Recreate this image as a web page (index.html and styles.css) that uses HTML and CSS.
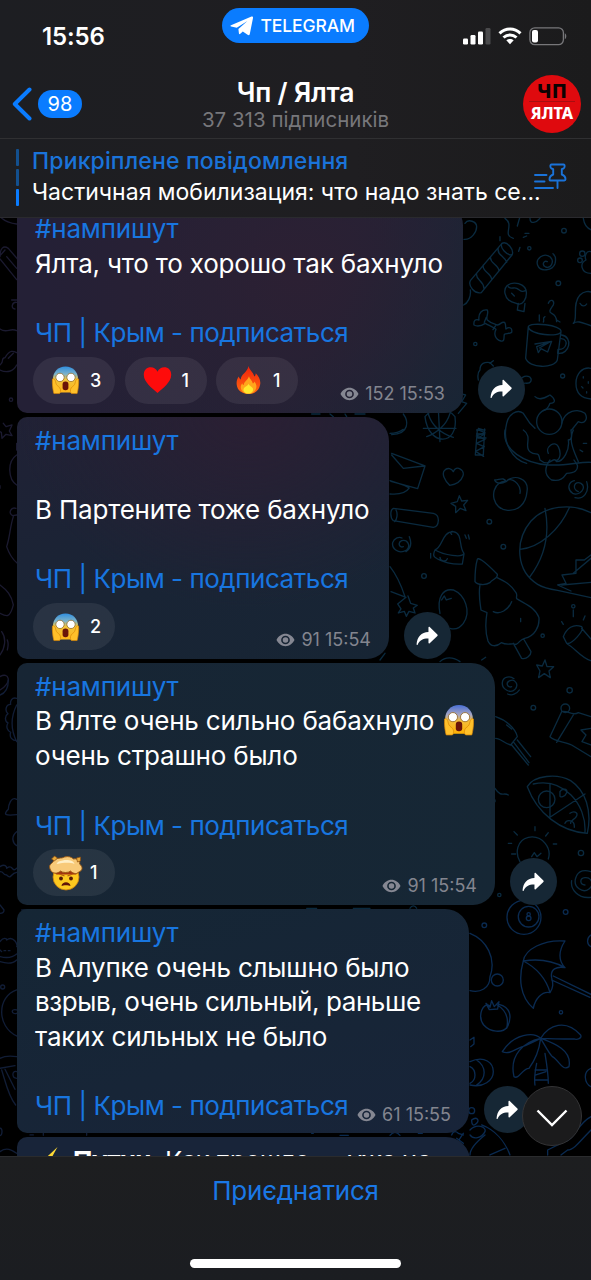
FILE: index.html
```html
<!DOCTYPE html>
<html lang="uk">

<head>
  <meta charset="UTF-8">
  <meta name="viewport" content="width=device-width, initial-scale=1.0">
  <title>Чп / Ялта</title>
  <link rel="stylesheet" href="styles.css">
</head>

<body>
  <!-- shared icons -->
  <svg class="sprite" aria-hidden="true">
    <defs>
      <linearGradient id="screamSkin" x1="0" y1="0" x2="0" y2="1">
        <stop offset="0" stop-color="#2f8fe0" />
        <stop offset=".3" stop-color="#7fb3c8" />
        <stop offset=".5" stop-color="#f2c43c" />
        <stop offset="1" stop-color="#ffb517" />
      </linearGradient>
      <linearGradient id="screamSkin2" x1="0" y1="0" x2="0" y2="1">
        <stop offset="0" stop-color="#4a6fd6" />
        <stop offset=".35" stop-color="#a9a7c0" />
        <stop offset=".55" stop-color="#f4bd3c" />
        <stop offset="1" stop-color="#ffb000" />
      </linearGradient>
      <linearGradient id="flame" x1="0" y1="0" x2="0" y2="1">
        <stop offset="0" stop-color="#f0200c" />
        <stop offset="1" stop-color="#ff6a10" />
      </linearGradient>
    </defs>
    <symbol id="scream" viewBox="0 0 30 30">
      <path d="M15 1C7.500 1 2 6.500 2 14c0 6 2 12 5 14h16c3-2 5-8 5-14C28 6.500 22.500 1 15 1z" />
      <path d="M1.500 14c2-1 3 1 3.500 4 .5 2.500 2 3 4 5 1.500 2 1 6-.5 6H3c-1-3-2-11-1.500-15zM28.500 14c-2-1-3 1-3.500 4-.5 2.500-2 3-4 5-1.500 2-1 6 .5 6H27c1-3 2-11 1.500-15z" fill="#ffc02a" stroke="#d98708" stroke-width=".7" />
      <circle cx="9.300" cy="12.300" r="4.300" fill="#fff" stroke="#8a5a12" stroke-width=".7" />
      <circle cx="20.700" cy="12.300" r="4.300" fill="#fff" stroke="#8a5a12" stroke-width=".7" />
      <rect x="12" y="16.500" width="6" height="9" rx="2.800" fill="#6b1408" />
    </symbol>
    <symbol id="heart" viewBox="0 0 30 30">
      <path d="M15 28.500C9 23 .8 17 .8 9.500.8 4.500 4 1.800 8 1.800c3.200 0 5.700 1.700 7 4.700 1.300-3 3.800-4.700 7-4.700 4 0 7.200 2.700 7.200 7.700C29.200 17 21 23 15 28.500z" fill="#fe0b0b" />
    </symbol>
    <symbol id="fire" viewBox="0 0 30 30">
      <path d="M15 .5c.5 4 5 6 6 11 1-.5 1.500-2 1.500-3.500 3 3 5.500 7 4.500 12-1 6-5.500 9.500-12 9.500S3.500 26 2.800 20c-.5-4 .7-6.500 2.200-8.500.3 1.500 1 2.500 2 3C7 9 14 7 15 .5z" fill="url(#flame)" />
      <path d="M15.500 11c.5 3 3.500 4.500 4 7.500 1-.3 1.300-1 1.500-2 2.500 3 3 6 1 9-1.500 2.500-4 3.800-7 3.800s-6-1.300-7.300-4c-1.300-2.500-.7-5 .8-7 .2 1 .8 1.700 1.500 2 .2-4 4.500-5.300 5.500-9.300z" fill="#ffa51c" />
      <path d="M15 19c.5 2 3 3 4.500 4.500 1 2.500-1 5.500-4.500 5.500s-6-2.500-5-5c1-2 4.500-2.500 5-5z" fill="#ffe82e" />
    </symbol>
    <symbol id="mindblown" viewBox="0 0 34 36">
      <circle cx="17.500" cy="22" r="13" fill="#fdc91f" stroke="#c77b10" stroke-width=".8" />
      <path d="M4.500 17c6-4 20-4 26 0l-3 2.500H8z" fill="#a2330f" />
      <path d="M2 15c-3-6 2-6 3-9 3-4 8-2 11-4 4-1 7 0 9 2 5-1 7 3 6 5 4 3 3 7-1 8-2 3-6 1-8-1-2 2-8 2-10 0-3 3-8 3-10-1z" fill="#f8ca79" stroke="#99560e" stroke-width=".9" />
      <path d="M8 9c2-4 6-3 8-4 4 0 9 0 10 4-6-2-11-1-18 0z" fill="#ffefc6" />
      <path d="M3 4l3-3 3 2-3 3zM28 3l4-1v4l-3 1z" fill="#e8a93a" stroke="#8a4c10" stroke-width=".7" />
      <path d="M11 19l5 2M24 19l-5 2" stroke="#b55a0e" stroke-width="1.200" />
      <circle cx="12.500" cy="23.500" r="1.900" fill="#541a08" />
      <circle cx="22.500" cy="23.500" r="1.900" fill="#541a08" />
      <path d="M13 31c.5-5 8.500-5 9 0-2-1-7-1-9 0z" fill="#601408" />
    </symbol>
    <symbol id="eye" viewBox="0 0 20 14">
      <path fill-rule="evenodd" d="M.5 7C2.500 3 6 .5 10 .5S17.500 3 19.500 7c-2 4-5.500 6.500-9.500 6.500S2.500 11 .5 7zM10 2.400a4.600 4.600 0 1 0 0 9.200 4.600 4.600 0 0 0 0-9.200z" />
      <path fill-rule="evenodd" d="M10 4.100a2.900 2.900 0 1 0 0 5.800 2.900 2.900 0 0 0 0-5.800z" />
    </symbol>
    <symbol id="share" viewBox="0 0 24 20">
      <path d="M13 1.200c0-.9.700-1.200 1.300-.6l8 7.900c.5.500.5 1 0 1.500l-8 7.600c-.6.600-1.300.3-1.300-.5v-4.400C7.500 12.500 4 14.500 1.700 19c-.4.700-1.200.5-1.100-.3C1.200 11 5.500 6.300 13 5.900z" />
    </symbol>
  </svg>

  <header class="header">
    <div class="status">
      <div class="time">15:56</div>
      <div class="back-app">
        <svg width="24" height="20" viewBox="0 0 24 20">
          <path d="M1 9.300L21.500.6c1-.4 1.700.2 1.500 1.300L19.800 18c-.3 1.300-1.200 1.500-2.200.8l-4.800-3.400-2.500 2.400c-.7.600-1.300.4-1.400-.6L8.400 13l9-8-10.600 6.800L1.100 10.500c-.8-.2-.9-.8-.1-1.200z" fill="#fff" />
        </svg>
        <span>TELEGRAM</span>
      </div>
      <div class="indicators">
        <svg width="28" height="18" viewBox="0 0 28 18">
          <rect x="0" y="11.500" width="5" height="6" rx="1.200" fill="#fff" />
          <rect x="7.500" y="8" width="5" height="9.500" rx="1.200" fill="#fff" />
          <rect x="15" y="4.500" width="5" height="13" rx="1.200" fill="#fff" />
          <rect x="22.500" y="1" width="5" height="16.500" rx="1.200" fill="#4a4a4c" />
        </svg>
        <svg width="24" height="18" viewBox="0 0 24 18">
          <g fill="none" stroke="#fff" stroke-width="3">
            <path d="M1.500 6.300c6-5.700 15-5.700 21 0" />
            <path d="M5.500 10.500c3.800-3.500 9.200-3.500 13 0" />
          </g>
          <path d="M8.300 13.300c2.200-1.900 5.200-1.900 7.400 0L12 17.300z" fill="#fff" />
        </svg>
        <svg width="38" height="19" viewBox="0 0 38 19">
          <rect x=".9" y=".9" width="33.500" height="16.700" rx="4.800" fill="none" stroke="#77777a" stroke-width="1.300" />
          <rect x="3" y="3" width="6" height="12.500" rx="2" fill="#fff" />
          <path d="M35.800 6.300c2 .8 2 5 0 5.900z" fill="#77777a" />
        </svg>
      </div>
    </div>

    <div class="nav">
      <div class="back">
        <svg width="20" height="34" viewBox="0 0 20 34">
          <path d="M17.500 2.500L2.800 17l14.700 14.500" fill="none" stroke="#0a7cff" stroke-width="4" stroke-linecap="round" stroke-linejoin="round" />
        </svg>
        <span class="badge">98</span>
      </div>
      <div class="heading">
        <h1 class="title">Чп / Ялта</h1>
        <div class="subtitle">37 313 підписників</div>
      </div>
      <div class="avatar">
        <span class="avatar-top">ЧП</span>
        <span class="avatar-bottom">ЯЛТА</span>
      </div>
    </div>

    <div class="pinned">
      <div class="pinned-bars"><i></i><i></i><i class="active"></i></div>
      <div class="pinned-text">
        <div class="pinned-title">Прикріплене повідомлення</div>
        <div class="pinned-body">Частичная мобилизация: что надо знать се...</div>
      </div>
      <svg class="pin" width="33" height="27" viewBox="0 0 33 27">
        <g fill="none" stroke="#1a73d9" stroke-width="1.900" stroke-linecap="round" stroke-linejoin="round">
          <path d="M1 12h11.500M1 18.500h9.500M1 25h18" />
          <path d="M17.500 1.500h12c1.500 0 1.500 3.500 0 4l-1.700.6v5.400c2.300.9 3.700 2.800 3.700 4.800 0 .9-.4 1.200-1.200 1.200H16.700c-.8 0-1.200-.3-1.200-1.200 0-2 1.400-3.900 3.700-4.800V6.100l-1.700-.6c-1.500-.5-1.500-4 0-4zM23.500 17.500V25" />
        </g>
      </svg>
    </div>
  </header>

  <main class="chat">
    <!-- doodle wallpaper -->
    <svg class="wallpaper" viewBox="0 218 591 938" aria-hidden="true">
      <g class="doodles teal" transform="translate(290 210) scale(.3333)">
        <path d="M525 40c10-15 35-5 35 10s-15 40-38 38M645 25c30 20-10 50 25 60M690 20l-8 28M720 25c0 20 20 12 30 0M880 25c3 20 10 30 25 35" />
        <path d="M541 212l95-112c15-8 38 20 30 35l-92 113c-20 5-40-20-33-36zM560 190c-5 20 20 20 22 45M580 165c-5 20 22 22 25 42M602 140c-5 20 22 22 25 42M625 115c-5 20 18 22 25 42M541 240c3 20-8 40-20 45" />
        <path d="M636 100c-8 12 15 38 30 34M630 80v12M705 70h12M700 82l10-4M690 112l-4 12" />
        <circle cx="822" cy="62" r="7" /><circle cx="718" cy="115" r="5" /><circle cx="805" cy="220" r="7" /><circle cx="877" cy="131" r="8" /><circle cx="870" cy="151" r="7" /><circle cx="556" cy="402" r="5" /><circle cx="818" cy="498" r="6" />
        <path d="M772 155c-10-6-18 10-5 16 15 5 28-15 14-30-20-15-45 5-38 25 8 22 45 15 52-5 4-15 0-25-6-30" />
        <path d="M903 125c-15-5-20 15-15 25-20 10-15 40 15 40" />
        <path d="M645 250c-8-40 60-40 64-5 2 20-10 45-30 35-20-5-30-12-34-30zM655 230c10 10 15 0 25 5s15 15 28 5M685 280l-3 20 20 5 3-25M665 250l8 8" />
        <path d="M552 345c-2-15 5-18 15-15-3-22 10-32 25-30 5 10-5 20 0 30 10 10 20 12 30 15 12-2 10-10 22-8 5 8 2 14 4 20 10-8 20-3 17 10-8 5-16 3-22 6-2 10 2 22-10 20-18-5-22-22-15-35-10-8-22-12-32-18-12 8-22 12-34 5zM589 322l-6 15M617 347l-8 12M850 340c15-10-5-60 20-85 12-12 28-12 35-8M850 340c15-10 30 0 55 8M870 280c5 10 15 10 20 2" />
        <path d="M715 350c5-15 102-5 98 15-3 18-95 10-98-15zl-8 95c10 30 85 32 95 5l11-85M815 375c35 5 25 60-12 55l1-12c25 3 35-30 10-32M735 402l50-8-12 32-20-10-8 12-5-18 40-14-32 18" />
        <path d="M775 280c5-15 20-10 15 5-10 15-15 20-5 25s15 12 15 25M765 320c-10 5 0 10-5 16M748 315v18M800 330l10 6" />
        <path d="M903 475c-25-5-45 15-45 45s15 45 45 47M880 500v4M895 515v5M875 530l4 4M890 545v4" />
        <path d="M570 480c0-20 15-25 30-22l10 10M565 510c-3-15 0-25 5-30M600 460l10-8M690 510c15-20 40-10 32 5-5 10-20 0-25 8" />
        <circle cx="778" cy="635" r="38" />
        <path d="M735 560c15 15 35 0 45-5 15 10 20 25 0 25-5 15-12 20-20 22M650 640c5-25 30-45 50-30l20 30 15 15M815 640c10-40 50-45 70-30 10 15 0 35-20 25l-20 25M650 640c-15 60 20 110 60 120" />
        <path d="M405 620c25-30 65-30 90 0 12 90-80 90-90 0zM400 655h98M415 612c10 35 40 60 75 70M480 610c-10 35-40 60-70 70M445 597l5 98M505 610l25-30-15-5 12-20-20-5M340 612c15 20 20 60-35 62M65 612h25M120 612l10 8M165 612l5 8M195 612h30" />
        <path d="M560 660h25M560 672h25l-22 12h25M565 655l15 5" />
      </g>
      <g class="doodles teal" transform="translate(290 430) scale(.3333)">
        <path d="M565 0l20 8-26 10 26 10-26 12 24 10-26 14 24 15M562 0l-6 75h24l4-78M305 70l100 38-22 68-80-22M305 75l35 40 62-7M300 152c25 10 40 10 58 22-10 15-35 20-58 18M300 10c20 0 30-5 40-12" />
        <path d="M490 125c8-22 35-5 29 12-5 15-15 25-40 29-15-15-25-35-15-45 8-10 22-5 26 4zM508 197l7 16 18-2-12 14 7 17-17-7-14 13 0-19-14-9 19-5z" />
        <path d="M648 155c25-25 70-10 63 30-3 40-30 58-58 56-45-3-55-60-25-82 8-5 14-6 20-4zM648 155c-5-15-20-5-34-5 5 12 20 12 34 5zM655 148c20 0 40 20 35 42M780 90c-15 20-20 45 5 60 25 5 35-5 45-20 25 0 35-10 32-25l-10-15" />
        <path d="M645 0c-10 60 60 100 130 105h20c40 0 80-10 108-8M700 0c30 20 0 50 20 65s25-5 30 25c30 25 40-15 50 5 20 0 40-35 35-65 15 0 8-25 8-30M775 70c-10-20 20-40 30-20s5 40-8 42M850 0c-15 30 0 60 15 95M880 40h10M870 60l8 5" />
        <path d="M865 185c-20-8-12-35 8-25 20 12-5 40-25 30-20-15-10-35 5-38M890 155c10 30-10 55-35 48M310 235l120 15c22 5 18 40 0 42l-120-20c-10-8-10-32 0-37zM318 240c6 10 3 30-4 35M340 350c-12 5-18-12-5-18 18-5 28 15 15 28-25 15-45-5-42-22 5-15 20-18 28-14M358 320c8 20 5 35-10 45" />
        <path d="M435 360c25-10 20-55 55-55 30 5 15 45 32 65-5 15-60 5-87-10zM435 360c-5 10-5 18 0 22 20 15 55 22 82 20l5-30M450 382c0 12 18 15 22 4M490 305c-8-2-10 5-5 8M525 315l4 10M535 315l3 12M422 370v14" />
        <circle cx="598" cy="275" r="7" /><circle cx="640" cy="350" r="7" /><circle cx="402" cy="438" r="7" /><circle cx="758" cy="617" r="5" /><circle cx="850" cy="529" r="5" />
        <path d="M903 248c-60-30-140-20-180 25-50 60-45 150 20 190 20 12 40 15 60 18l100 22M690 358c60-5 120-60 148-125M720 440c45-60 60-130 45-205M903 375l-20 15-25 0 0 40-42 5 12 25-25 5 40 18M850 430l53-45M815 465l88-8" />
        <path d="M562 388c2-5 14-2 60 45 3 12-15 15-22 25-12 8-38 8-45-3 0-25 2-50 7-67zM570 465c-5 30 0 50 3 75 8 5 16 5 18 8-5 30-5 60 3 85 8 18 25 18 40 5 20 10 30 0 45 5 12-8 12-15 25-18 30-5 45-35 43-62-10-30-40-40-67-57-2-6 3-10-2-18-15-25-35-35-58-46M610 545c20 10 45-5 55-30M670 640l25 45c15 5 28-10 28-20l-22-38M692 565v10" />
        <path d="M450 550c-10-50 10-75 40-70 35 15 55 65 30 100-15 20-30 18-40 15M455 510l8-12 6 12 15-5M300 410c20 25 35 60 45 90M303 485l45 17-25 20 10 15-8 12 18-5 6 15 8-15 18 5-5-15 12-8-20-6-8-22" />
        <path d="M820 620c10-25 30-40 55-30 10 10-30 55-45 50zM875 595l28 32M832 642c20 10 40 40 70 50M850 540v20M815 575l5 8M880 570l5-12M740 705l17 3 8-18 6 20 20 0-14 13 4 20-18-12-17 12 4-20zM450 695c15-15 40-15 60 0M270 690l15-20M575 690l12-8" />
      </g>
      <g class="doodles teal" transform="translate(290 660) scale(.3333)">
        <path d="M665 80c-12 5-20-12-5-18s28 12 15 26-40 0-38-20 25-20 35-12M688 90c-8 12-22 18-35 12" />
        <circle cx="839" cy="91" r="8" /><circle cx="730" cy="143" r="7" /><circle cx="826" cy="145" r="13" /><circle cx="873" cy="579" r="8" /><circle cx="628" cy="705" r="5" /><circle cx="770" cy="418" r="25" />
        <path d="M617 170c30 10 60 35 65 60l-20 25c-20-5-30-20-45-20M665 255l50 60M672 248l45 60M682 240l40 50M650 195l15 12M815 155l-35 75c15 15 45 15 65 25l58 35M815 155c20-5 30 15 50 3l38 12M850 165l-50 82M903 205l-30 5 15 15-12 20 27 10" />
        <path d="M712 380c20-35 90-40 130-18 45 30 65 90 50 158-80-5-150-60-180-140zM730 372c90-20 160 60 155 145M780 370v102M780 472l105-70M810 395c5-10 25-10 20 3s-20 15-20 10zM840 460c10-8 25-5 20 8s-20 12-18 22M825 490c5-12 30-12 28 12M615 385c20 30 25 10 40 20M615 420v5" />
        <path d="M690 605c-15-25-10-65 25-73 45-8 70 35 60 65M725 590l8-12 8 12 12-10M655 550h10M672 515l10 10M735 500v12M775 518l-8 10M790 552h10M665 582h12" />
        <path d="M885 675c-15 0-18-20 0-22s30 20 12 34-48-5-40-32 30-25 46-20M903 712c-40 5-62-25-58-50M50 745h30M190 745h50M360 745c5-10 15-10 20 0" />
      </g>
      <g class="doodles blue" transform="translate(290 900) scale(.3333)">
        <circle cx="702" cy="52" r="51" /><circle cx="716" cy="50" r="31" /><circle cx="716" cy="43" r="5" /><circle cx="716" cy="55" r="7" />
        <circle cx="583" cy="76" r="7" /><circle cx="827" cy="36" r="7" /><circle cx="622" cy="240" r="18" /><circle cx="813" cy="337" r="5" /><circle cx="545" cy="632" r="9" />
        <path d="M540 100c50 20 80 75 60 130 0 35-30 50-60 42M903 105c-15 10-12 30 0 35" />
        <path d="M700 183c5-35 60-65 125-60-20 30-20 60 0 80-25-5-45 5-40 30 5 20 5 30-5 45-25-5-45 20-50 47-40-35-45-90-30-142zM700 183c50-8 90 0 125 20M700 183c40 20 70 55 80 95M790 228l113 55M785 240l115 52" />
        <path d="M600 318c-20-15-40 30-18 58 18 20 55 25 70 5 15-30 10-60-25-68M588 310l12 12 5-20 8 18 14-15-4 22-25 2zM622 315c25 15 35 40 28 70M540 420l12-8v20l-10 8" />
        <path d="M752 415c-20-20-80-15-115 40 20 10 40-8 60-15 15-5 35-15 55-25zM752 415c25-40 75-60 120-10 5 10-10 15-20 12-40 0-60 0-100-2zM752 415c-50 10-95 50-80 115 15 10 25-25 45-25 15-20 30-50 35-90zM752 415c40 15 95 35 85 85-20 15-30-20-50-30-10-10-20-30-35-55zM740 490c-5 25-8 45-5 65M765 460c5 30 10 60 10 90M735 510h35M735 540h38M738 525l30-10" />
        <path d="M540 485c45-20 70 5 70 30s-30 50-70 40M560 480c30 20 30 55 0 75M540 500c20 10 20 40 0 50M903 505c-25 10-20 45 0 55M545 660c15-12 25 0 15 10s-15 5-15-10zM540 690c20-20 50-10 45 5-10 20-35 25-45 10M575 675c40 15 70 50 85 90M540 765c0-20 20-40 45-60M600 765l45-20M903 650c-40 20-50 70-80 75l-50 25v15M903 690c-30 30-50 60-70 60l-20 15" />
        <path d="M65 700h5M150 706h25M300 706c10-12 20-12 30 0M385 700h12M485 705c5-15 15-10 20-5l15 5M500 715l20 15M520 700l-20 30" />
      </g>
      <g class="doodles violet" transform="translate(0 215) scale(.3333)">
        <path d="M0 5c15 15 30 20 50 22M0 125c0-25 10-35 25-25l30 35M0 132l50 62M15 105L0 122M20 125l30 35M50 255H35M50 262c-15-2-18 20-5 20M0 342c20 15 30-5 50 5M0 450c15-10 0-20 15-22 15-25 25-20 35-15M25 430l15-15M0 465c20 10 40 5 50-15" />
        <circle cx="33" cy="554" r="5" />
        <path d="M10 625l8 10 18-5-8 18 8 14-18-4-12 12-2-18-10-5M50 720c-30 20-25 75 0 90M50 685v20M48 880c-15-5-25 15-10 22l12-2M40 905c-10 30-10 60-20 90 10 30 20 40 32 50M0 812v8M0 1110c20 15 35 30 40 60-10 40-20 35-40 25M5 1250c15 20 10 50-5 70M22 1275c5 12 2 18 0 30M0 1385c25-15 40 15 0 40" />
      </g>
      <g class="doodles indigo" transform="translate(0 680) scale(.3333)">
        <path d="M25 0c0 25-10 40-25 45M50 55c-15-5-20 10-18 18-15 0-18 20-8 28-12 8-8 25 0 28-8 12 0 25 8 28-5 15 5 25 18 25M50 75c-20 40-15 80 0 110M50 358c-18-10-25 20-25 30-15 15-12 20 25 16M50 455c-18 15-12 35 0 42M0 560c15-10 20 0 20 5 20-15 15 15 30 0M0 575c15 0 5 10 20 10 15 15 10-5 30-8M0 675l12 15c0 8-8 10-12 10M0 785c10-15 20-10 20-5 20-15 35 15 30 20M0 810l5 5M12 812h5M25 812h5M0 830c20 5 35 5 50-8M0 845c25 8 40 5 50-5" />
        <circle cx="8" cy="921" r="6" />
        <path d="M50 930c-60 20-60 110 0 138M50 990c-20-5-15 15 0 10M0 1135c15-8 30-8 50-5M0 1165l45-8M5 1170c10 30 20 80 42 105M15 1168l30 60M50 1175c-15-5-15 20 0 20M0 1345c8-2 8 20 0 22M0 1415c20-15 35-5 50 5M90 1365h10M65 690h30M180 690h50M130 1360v6M260 1360v6" />
      </g>
    </svg>

    <div class="row">
      <div class="bubble">
        <p class="text"><a>#нампишут</a><br>Ялта, что то хорошо так бахнуло<br><br><a class="sub">ЧП | Крым - подписаться</a></p>
        <div class="bottom">
          <div class="reactions">
            <span class="reaction"><svg class="emoji" fill="url(#screamSkin)"><use href="#scream" /></svg>3</span>
            <span class="reaction"><svg class="emoji"><use href="#heart" /></svg>1</span>
            <span class="reaction"><svg class="emoji"><use href="#fire" /></svg>1</span>
          </div>
          <div class="meta"><svg class="eye"><use href="#eye" /></svg>152 15:53</div>
        </div>
      </div>
      <button class="share"><svg><use href="#share" /></svg></button>
    </div>

    <div class="row">
      <div class="bubble second">
        <p class="text"><a>#нампишут</a><br><br>В Партените тоже бахнуло<br><br><a class="sub">ЧП | Крым - подписаться</a></p>
        <div class="bottom">
          <div class="reactions">
            <span class="reaction"><svg class="emoji" fill="url(#screamSkin)"><use href="#scream" /></svg>2</span>
          </div>
          <div class="meta"><svg class="eye"><use href="#eye" /></svg>91 15:54</div>
        </div>
      </div>
      <button class="share"><svg><use href="#share" /></svg></button>
    </div>

    <div class="row">
      <div class="bubble third">
        <p class="text"><a>#нампишут</a><br>В Ялте очень сильно бабахнуло<svg class="inline-emoji" fill="url(#screamSkin2)"><use href="#scream" /></svg><br>очень страшно было<br><br><a class="sub">ЧП | Крым - подписаться</a></p>
        <div class="bottom">
          <div class="reactions">
            <span class="reaction"><svg class="emoji big"><use href="#mindblown" /></svg>1</span>
          </div>
          <div class="meta"><svg class="eye"><use href="#eye" /></svg>91 15:54</div>
        </div>
      </div>
      <button class="share"><svg><use href="#share" /></svg></button>
    </div>

    <div class="row">
      <div class="bubble fourth">
        <p class="text"><a>#нампишут</a><br>В Алупке очень слышно было<br><span class="tight">взрыв, очень сильный, раньше</span><br>таких сильных не было<br><br></p>
        <div class="bottom last-line">
          <a class="text sub">ЧП | Крым - подписаться</a>
          <div class="meta"><svg class="eye"><use href="#eye" /></svg>61 15:55</div>
        </div>
      </div>
      <button class="share"><svg><use href="#share" /></svg></button>
    </div>

    <div class="row">
      <div class="bubble fifth">
        <p class="text"><svg class="bolt" viewBox="0 0 26 32"><path d="M21 1L3 18h8L5 31 24 12h-9z" fill="#fdd835" /></svg><b>Путин.</b> Как прошло — уже не</p>
      </div>
    </div>

    <button class="scroll-down">
      <svg width="32" height="18" viewBox="0 0 32 18">
        <path d="M1.500 1.500L16 16 30.500 1.500" fill="none" stroke="#fff" stroke-width="2.400" />
      </svg>
    </button>
  </main>

  <footer class="footer">
    <a class="join">Приєднатися</a>
    <div class="home"></div>
  </footer>
</body>

</html>
```
FILE: styles.css
```css
* {
  box-sizing: border-box;
  margin: 0;
  padding: 0;
}

body {
  width: 591px;
  height: 1280px;
  display: flex;
  flex-direction: column;
  overflow: hidden;
  background: #000;
  color: #fff;
  font-family: Inter, "Liberation Sans", sans-serif;
}

button {
  border: 0;
}

svg {
  flex: none;
}

.sprite {
  position: absolute;
  width: 0;
  height: 0;
}

/* header */
.header {
  height: 218px;
  flex: none;
  background: linear-gradient(90deg, #1d1e22, #1f1e21 60%, #1b1b1c);
  border-bottom: 1px solid #2a2a2e;
}

.status {
  height: 70px;
  display: grid;
  grid-template-columns: 1fr 146px 1fr;
}

.time {
  padding: 22px 0 0 42px;
  font-size: 24px;
  line-height: 29px;
  font-weight: 600;
  letter-spacing: -.1px;
}

.back-app {
  height: 35px;
  margin-top: 8px;
  margin-left: -1px;
  padding-left: 8px;
  display: flex;
  align-items: center;
  gap: 7px;
  border-radius: 18px;
  background: #0a7cff;
  font-size: 17.500px;
  font-weight: 500;
  letter-spacing: -.1px;
}

.indicators {
  display: flex;
  justify-content: flex-end;
  gap: 7px;
  padding: 27px 24px 0 0;
}

.nav {
  height: 69px;
  display: grid;
  grid-template-columns: 1fr auto 1fr;
  border-bottom: 1px solid #303032;
}

.back {
  display: flex;
  align-items: center;
  gap: 6px;
  padding-left: 12px;
}

.badge {
  height: 28px;
  width: 44px;
  border-radius: 14px;
  background: #0a7cff;
  font-size: 20px;
  line-height: 28px;
  text-align: center;
}

.heading {
  padding-top: 6px;
  text-align: center;
}

.title {
  font-size: 26.500px;
  line-height: 32px;
  font-weight: 600;
  letter-spacing: -.2px;
}

.subtitle {
  font-size: 20.500px;
  line-height: 24px;
  color: #77777b;
}

.avatar {
  width: 58px;
  height: 58px;
  margin: 5px 10px 0 0;
  justify-self: end;
  border-radius: 50%;
  background: #df0a0e;
  display: flex;
  flex-direction: column;
  align-items: center;
  font-family: "Noto Sans", sans-serif;
  font-weight: 800;
}

.avatar-top {
  height: 27px;
  padding-top: 4px;
  border-bottom: 1px solid #a80d10;
  width: 46px;
  text-align: center;
  color: #0c0202;
  font-size: 20px;
  line-height: 23px;
}

.avatar-bottom {
  font-size: 16px;
  line-height: 23px;
}

.pinned {
  height: 78px;
  display: flex;
  padding: 8px 24px 0 16px;
}

.pinned-bars {
  width: 3px;
  margin-right: 13px;
  padding-top: 2px;
  display: flex;
  flex-direction: column;
  gap: 3px;
}

.pinned-bars i {
  height: 17px;
  border-radius: 1px;
  background: #13508f;
}

.pinned-bars .active {
  background: #0a7cff;
}

.pinned-text {
  width: 502px;
  font-size: 23px;
  line-height: 34px;
  white-space: nowrap;
}

.pinned-title {
  line-height: 28px;
  font-weight: 500;
  letter-spacing: .15px;
  color: #1a73d9;
}

.pin {
  margin-top: 16px;
}

/* messages */
.chat {
  position: relative;
  height: 938px;
  flex: none;
  overflow: hidden;
}

.wallpaper {
  position: absolute;
  top: 0;
  left: 0;
  width: 591px;
  height: 938px;
}

.doodles {
  fill: none;
  stroke-width: 4;
  stroke-linecap: round;
  stroke-linejoin: round;
}

.teal {
  stroke: #0a2a3f;
}

.blue {
  stroke: #0a2a50;
}

.violet {
  stroke: #1b1a30;
}

.indigo {
  stroke: #111d36;
}

.row {
  position: relative;
  display: flex;
  align-items: flex-end;
  gap: 15px;
  margin: 0 0 3.700px 17px;
}

/* the first message is scrolled under the header */
.row:nth-of-type(1) {
  margin-top: -13px;
}

.bubble {
  width: 446px;
  padding: 7px 18px 9px;
  border-radius: 10px 20px 18px 10px;
  background: radial-gradient(ellipse 260px 240px at 280px 70px, #2c2033, rgba(44, 32, 51, 0)), linear-gradient(115deg, #242036 30%, #212236 65%, #152635 92%);
}

.second {
  width: 372px;
  background: radial-gradient(ellipse 230px 200px at 230px -10px, #2b1f33, rgba(43, 31, 51, 0)), linear-gradient(165deg, #202135, #192435 60%, #172534);
  border-radius: 10px 24px 22px 10px;
}

.third {
  width: 478px;
  background: linear-gradient(100deg, #172534, #162735);
  border-radius: 10px 24px 22px 10px;
}

.fourth {
  width: 452px;
  background: linear-gradient(165deg, #152635, #172537 60%, #182439);
  border-radius: 10px 24px 22px 10px;
}

.fifth {
  width: 453px;
  background: #182439;
  border-radius: 10px 24px 22px 10px;
}

.text {
  font-size: 26px;
  line-height: 34.700px;
  letter-spacing: -.2px;
  white-space: nowrap;
}

.text a,
a.text {
  color: #1876e0;
}

.text .sub,
a.sub {
  letter-spacing: -.46px;
}

.tight {
  letter-spacing: -.4px;
}

.bottom {
  display: flex;
  justify-content: space-between;
  align-items: flex-end;
  margin: 6px 0 0 -2px;
}

.last-line {
  margin: 0;
}

.reactions {
  display: flex;
  gap: 9.500px;
}

.reaction {
  width: 82px;
  height: 47px;
  padding-left: 18px;
  display: flex;
  align-items: center;
  gap: 10px;
  border-radius: 24px;
  background: rgba(255, 255, 255, .07);
  font-size: 18px;
  font-weight: 500;
}

.emoji {
  width: 29px;
  height: 30px;
}

.big {
  width: 35px;
  height: 36px;
  margin: 0 -3px;
}

.meta {
  display: flex;
  align-items: center;
  gap: 6px;
  font-size: 18px;
  line-height: 20px;
  color: #83858f;
  white-space: nowrap;
}

.last-line .meta {
  margin-bottom: -1px;
}

.eye {
  width: 19px;
  height: 14px;
  fill: #858792;
}

.inline-emoji {
  width: 32px;
  height: 32px;
  margin-left: 9px;
  vertical-align: -6px;
}

.bolt {
  width: 26px;
  height: 30px;
  margin: 0 10px 0 2px;
  vertical-align: -6px;
}

.fifth .text {
  letter-spacing: -.8px;
}

.share {
  width: 47px;
  height: 47px;
  flex: none;
  display: flex;
  align-items: center;
  justify-content: center;
  border-radius: 50%;
  background: #162735;
}

.share svg {
  width: 23px;
  height: 20px;
  fill: #fff;
}

/* floats over the last messages */
.scroll-down {
  position: absolute;
  right: 9px;
  bottom: 10px;
  width: 60px;
  height: 60px;
  display: flex;
  align-items: center;
  justify-content: center;
  padding-top: 4px;
  border: 1px solid #333335;
  border-radius: 50%;
  background: #1b1b1c;
}

/* footer */
.footer {
  flex: 1;
  display: flex;
  flex-direction: column;
  align-items: center;
  justify-content: space-between;
  padding: 17px 0 12px;
  border-top: 1px solid #2a2b2d;
  background: linear-gradient(#1d1e20, #1b1d21);
}

.join {
  font-size: 26px;
  line-height: 34px;
  letter-spacing: -.2px;
  color: #1a78e6;
}

.home {
  width: 211px;
  height: 9px;
  border-radius: 5px;
  background: #fff;
}
```
